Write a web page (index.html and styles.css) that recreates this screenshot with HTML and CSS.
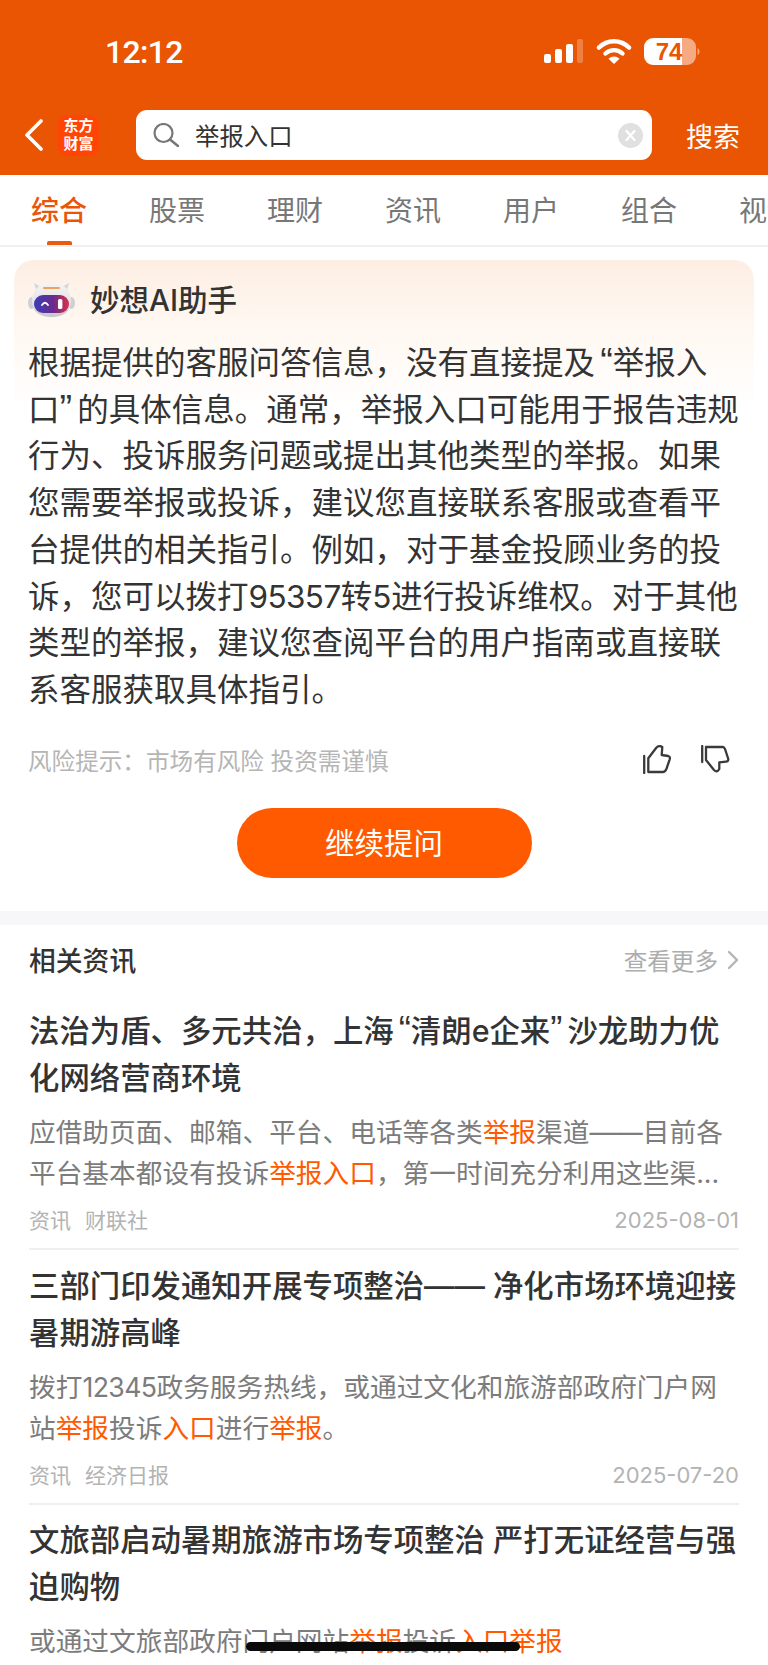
FILE: index.html
```html
<!DOCTYPE html>
<html lang="zh-CN">
<head>
<meta charset="utf-8">
<title>举报入口</title>
<link rel="stylesheet" href="styles.css">
</head>
<body>
<div class="page">
  <header class="top">
    <div class="status">
      <span class="time">12:12</span>
      <svg class="status-icons" width="157" height="28" viewBox="0 0 157 28">
        <defs><clipPath id="bat"><rect x="100" y="0" width="52" height="27" rx="9"/></clipPath></defs>
        <rect x="0" y="16" width="7" height="9" rx="2" fill="#fff"/>
        <rect x="11" y="11" width="7" height="14" rx="2" fill="#fff"/>
        <rect x="22" y="6" width="7" height="19" rx="2" fill="#fff"/>
        <rect x="33" y="1" width="6" height="24" rx="2" fill="#fff" opacity=".25"/>
        <path d="M55 9.5A21 21 0 0 1 85 9.5" fill="none" stroke="#fff" stroke-width="4.6" stroke-linecap="round"/>
        <path d="M61.5 15.5A12.5 12.5 0 0 1 78.5 15.5" fill="none" stroke="#fff" stroke-width="4.4" stroke-linecap="round"/>
        <path d="M70 26L64.5 20.8A8 8 0 0 1 75.5 20.8Z" fill="#fff"/>
        <g clip-path="url(#bat)">
          <rect x="100" y="0" width="38" height="27" fill="#fff"/>
          <rect x="138" y="0" width="14" height="27" fill="#fff" opacity=".5"/>
        </g>
        <path d="M153.5 10A4 4 0 0 1 153.5 17Z" fill="#fff" opacity=".5"/>
        <text class="bat-num" x="125" y="22" text-anchor="middle">74</text>
      </svg>
    </div>
    <div class="nav">
      <svg class="back" width="18" height="32" viewBox="0 0 18 32"><path d="M16 2L2 16L16 30" fill="none" stroke="#fff" stroke-width="3.6" stroke-linecap="round" stroke-linejoin="round"/></svg>
      <div class="logo"><span>东方</span><span>财富</span></div>
      <div class="search">
        <svg class="search-icon" width="26" height="24" viewBox="0 0 26 24"><circle cx="10.5" cy="10" r="9" fill="none" stroke="#777" stroke-width="2.2"/><path d="M17 16.5L25 23" fill="none" stroke="#777" stroke-width="2.6" stroke-linecap="round"/></svg>
        <span class="query">举报入口</span>
        <svg class="clear" width="25" height="25" viewBox="0 0 25 25"><circle cx="12.5" cy="12.5" r="12.5" fill="#e0e0e0"/><path d="M8.5 8L16.5 17M16.5 8L8.5 17" stroke="#fff" stroke-width="2.2" stroke-linecap="round"/></svg>
      </div>
      <span class="go">搜索</span>
    </div>
  </header>

  <nav class="tabs">
    <span class="tab active">综合</span>
    <span class="tab">股票</span>
    <span class="tab">理财</span>
    <span class="tab">资讯</span>
    <span class="tab">用户</span>
    <span class="tab">组合</span>
    <span class="tab">视频</span>
  </nav>

  <section class="ai">
    <div class="card">
      <div class="card-head">
        <svg class="robot" width="47" height="36" viewBox="0 0 47 36">
          <defs>
            <linearGradient id="visor" x1="0" x2="1" y1="0" y2="0"><stop offset="0" stop-color="#3b3fb5"/><stop offset=".55" stop-color="#6a2a8c"/><stop offset="1" stop-color="#d9304a"/></linearGradient>
            <linearGradient id="shell" x1="0" x2="0" y1="0" y2="1"><stop offset="0" stop-color="#f6f3f1"/><stop offset=".6" stop-color="#e4e4e6"/><stop offset="1" stop-color="#c4c4ca"/></linearGradient>
          </defs>
          <path d="M8 8L6 1L13 5ZM39 8L41 1L34 5Z" fill="#d6d6da"/>
          <ellipse cx="3.5" cy="21" rx="3.5" ry="6" fill="#cfcfd4"/>
          <ellipse cx="43.5" cy="21" rx="3.5" ry="6" fill="#cfcfd4"/>
          <path d="M23.5 1C35 1 43 7 43 19C43 30 35 35 23.5 35C12 35 4 30 4 19C4 7 12 1 23.5 1Z" fill="url(#shell)"/>
          <rect x="15" y="5" width="17" height="2" rx="1" fill="#f0a060"/>
          <rect x="6" y="13" width="35" height="18" rx="9" fill="url(#visor)"/>
          <path d="M14 23Q17 18.5 20 23" fill="none" stroke="#fff" stroke-width="1.8" stroke-linecap="round"/>
          <rect x="30" y="17" width="4.4" height="10" rx="1.6" fill="#fff"/>
        </svg>
        <h2 class="card-title">妙想AI助手</h2>
      </div>
      <p class="answer">根据提供的客服问答信息，没有直接提及<span class="qo">“</span>举报入<br>口<span class="qc">”</span>的具体信息。通常，举报入口可能用于报告违规<br>行为、投诉服务问题或提出其他类型的举报。如果<br>您需要举报或投诉，建议您直接联系客服或查看平<br>台提供的相关指引。例如，对于基金投顾业务的投<br>诉，您可以拨打<span class="num">95357</span>转5进行投诉维权。对于其他<br>类型的举报，建议您查阅平台的用户指南或直接联<br>系客服获取具体指引。</p>
      <div class="risk-row">
        <span class="risk">风险提示：市场有风险 投资需谨慎</span>
        <div class="votes">
          <svg width="29" height="29" viewBox="0 0 29 29"><path d="M1.2 11V28M5.3 27V13.3L13.3 2.7Q16 0 19.3 2L18.7 10L25.3 11Q27.5 11.5 26.7 14.3L23.3 24.3Q22 27 20 27Z" fill="none" stroke="#3a3a3c" stroke-width="2.3" stroke-linejoin="round" stroke-linecap="round"/></svg>
          <svg width="29" height="29" viewBox="0 0 29 29"><path d="M1.2 1V17M5 2H22Q23 2 24 4L27.3 14Q27.5 16.5 25 16.7L18.3 17.3V24Q16 28 13 25L5 15Z" fill="none" stroke="#3a3a3c" stroke-width="2.3" stroke-linejoin="round" stroke-linecap="round"/></svg>
        </div>
      </div>
      <div class="ask-wrap"><span class="ask">继续提问</span></div>
    </div>
  </section>

  <section class="news">
    <div class="news-head">
      <h3 class="news-heading">相关资讯</h3>
      <span class="more">查看更多<svg width="12" height="20" viewBox="0 0 12 20"><path d="M2 2L10 10L2 18" fill="none" stroke="#b4b4b4" stroke-width="2.4" stroke-linecap="round" stroke-linejoin="round"/></svg></span>
    </div>

    <article class="item">
      <h4 class="item-title">法治为盾、多元共治，上海<span class="qo">“</span>清朗e企来<span class="qc">”</span>沙龙助力优化网络营商环境</h4>
      <p class="snippet">应借助页面、邮箱、平台、电话等各类<em>举报</em>渠道——目前各平台基本都设有投诉<em>举报入口</em>，第一时间充分利用这些渠...</p>
      <div class="meta"><span class="tags"><span>资讯</span><span>财联社</span></span><span class="date">2025-08-01</span></div>
    </article>

    <article class="item">
      <h4 class="item-title">三部门印发通知开展专项整治—— 净化市场环境迎接暑期游高峰</h4>
      <p class="snippet">拨打<span class="num">12345</span>政务服务热线，或通过文化和旅游部政府门户网站<em>举报</em>投诉<em>入口</em>进行<em>举报</em>。</p>
      <div class="meta"><span class="tags"><span>资讯</span><span>经济日报</span></span><span class="date">2025-07-20</span></div>
    </article>

    <article class="item">
      <h4 class="item-title">文旅部启动暑期旅游市场专项整治 严打无证经营与强迫购物</h4>
      <p class="snippet">或通过文旅部政府门户网站<em>举报</em>投诉<em>入口举报</em></p>
    </article>
  </section>

  <div class="home-bar"></div>
</div>
</body>
</html>
```

FILE: styles.css
```css
* { box-sizing: border-box; }
html, body { margin: 0; padding: 0; background: #fff; }
body { font-family: Inter, "Noto Sans CJK SC", sans-serif; }
h2, h3, h4, p { margin: 0; }
em { font-style: normal; color: #ff5a00; }

.qo, .qc { display: inline-block; width: .47em; font-size: 1.2em; line-height: 1; font-family: "Liberation Sans", sans-serif; }
.qo { text-align: right; }
.qc { text-align: left; }
.num { letter-spacing: -.6px; }

.page { position: relative; width: 768px; height: 1665px; overflow: hidden; }

.top { height: 175px; background: #ea5504; }
.status { height: 110px; padding: 32px 67px 0 105px; display: flex; justify-content: space-between; }
.time { font-family: Roboto, "Liberation Sans", sans-serif; font-size: 32px; font-weight: 500; line-height: 40px; letter-spacing: -.7px; color: #fff; }
.status-icons { margin-top: 6px; display: block; }
.bat-num { font-family: "Liberation Sans", sans-serif; font-size: 24px; font-weight: 700; fill: #ea5504; }

.nav { height: 50px; display: flex; align-items: center; padding-left: 25px; }
.back { display: block; }
.logo { width: 41px; height: 41px; margin-left: 15px; border-radius: 9px; background: #ff4506; color: #fff; font-size: 15px; font-weight: 700; line-height: 18px; display: flex; flex-direction: column; align-items: center; justify-content: center; }
.search { width: 516px; height: 50px; margin-left: 37px; padding: 0 9px 0 17px; border-radius: 11px; background: #fff; display: flex; align-items: center; }
.search-icon { display: block; }
.query { margin: 0 0 2px 16px; font-size: 24.4px; color: #333; flex: 1; }
.clear { display: block; }
.go { margin-left: 34px; font-size: 27px; color: #fff; white-space: nowrap; }

.tabs { height: 72px; display: flex; gap: 62px; padding: 0 0 0 31px; border-bottom: 2px solid #f0f0f0; overflow: hidden; }
.tab { position: relative; flex: none; width: 56px; font-size: 28px; line-height: 73px; color: #777; white-space: nowrap; }
.tab.active { color: #e9560a; font-weight: 500; }
.tab.active::after { content: ""; position: absolute; left: 16px; bottom: 0; width: 25px; height: 4px; border-radius: 2px 2px 0 0; background: #ea5a10; }

.ai { padding: 13px 14px 33px; border-bottom: 14px solid #f7f7f9; }
.card { padding: 22px 14px 0; border-radius: 20px 20px 0 0; background: linear-gradient(180deg, #fdeee3 0, #fff8f2 70px, #fff 150px); }
.card-head { display: flex; align-items: center; height: 36px; }
.robot { display: block; flex: none; }
.card-title { margin-left: 15px; font-size: 29.5px; font-weight: 500; line-height: 36px; color: #333; }
.answer { margin-top: 22px; font-size: 31.5px; line-height: 46.7px; color: #333; white-space: nowrap; }

.risk-row { margin-top: 31px; height: 30px; display: flex; align-items: center; justify-content: space-between; padding-right: 10px; }
.risk { font-size: 23.6px; color: #b5b5b5; white-space: nowrap; }
.votes { display: flex; gap: 29px; }
.votes svg { display: block; }

.ask-wrap { margin-top: 33px; display: flex; justify-content: center; }
.ask { width: 295px; height: 70px; border-radius: 35px; background: #ff5a00; color: #fff; font-size: 29.5px; line-height: 70px; text-align: center; }

.news { padding: 0 29px; }
.news-head { height: 72px; display: flex; align-items: center; justify-content: space-between; }
.news-heading { margin-bottom: 2px; font-size: 26.8px; font-weight: 500; color: #333; }
.more { margin-bottom: 2px; display: flex; align-items: center; gap: 9px; font-size: 23.6px; color: #adadad; }
.more svg { display: block; }

.item { padding: 12.5px 0 12px; border-bottom: 2px solid #efefef; }
.item:first-of-type { padding-top: 11.5px; }
.item-title { font-size: 30.4px; font-weight: 500; line-height: 47px; color: #333; }
.snippet { margin-top: 10px; font-size: 26.7px; line-height: 41px; color: #7c7c7c; }
.meta { margin-top: 12px; height: 30px; display: flex; align-items: center; justify-content: space-between; }
.tags { margin-bottom: 4px; display: flex; gap: 14px; font-size: 21px; color: #b3b3b3; }
.date { margin-bottom: 2px; font-size: 22px; color: #b3b3b3; }

.home-bar { position: absolute; left: 246px; top: 1642px; width: 274px; height: 9px; border-radius: 5px; background: #0a0a0a; }
```
